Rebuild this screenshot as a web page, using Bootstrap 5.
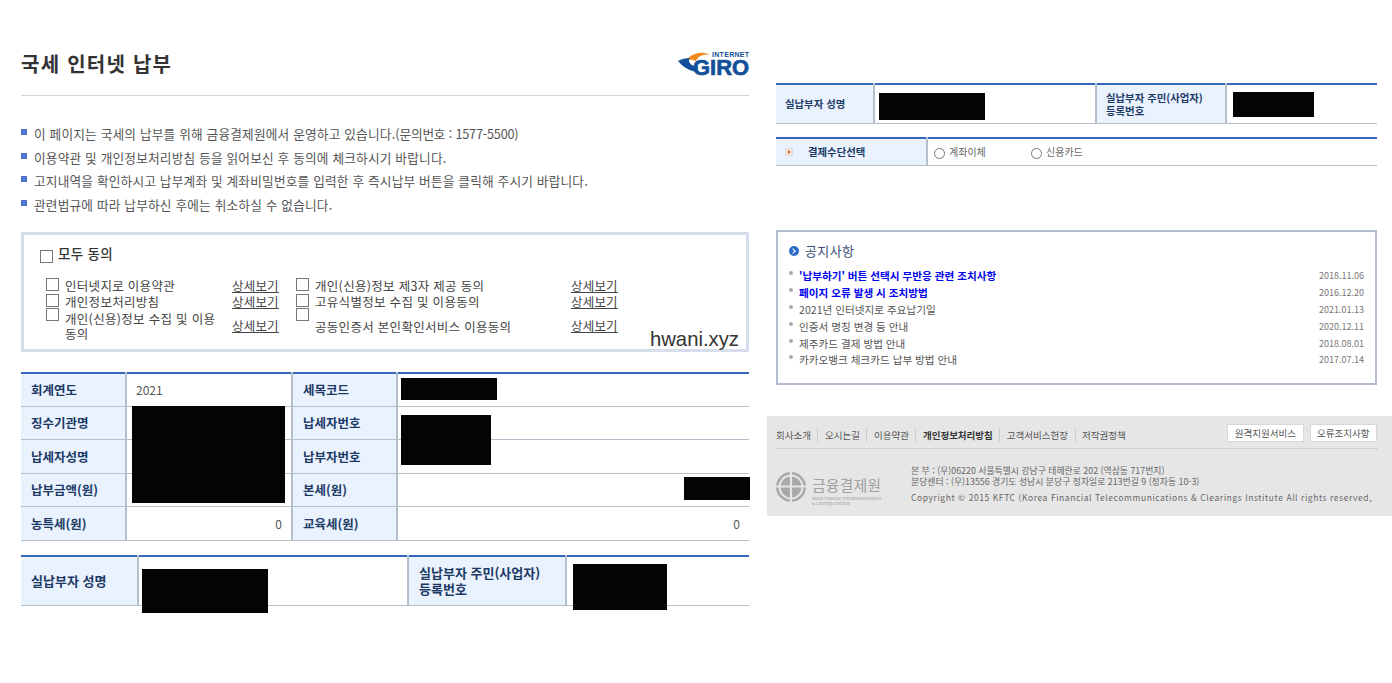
<!DOCTYPE html>
<html lang="ko">

<head>
    <meta charset="UTF-8">
    <meta name="viewport" content="width=device-width, initial-scale=1.0">
    <title>국세 인터넷 납부</title>
    <link href="https://cdn.jsdelivr.net/npm/bootstrap@5.3.0/dist/css/bootstrap.min.css" rel="stylesheet">
    <style>
        body {
            font-family: "Noto Sans CJK KR", "Liberation Sans", sans-serif;
            background-color: #fff;
            color: #555;
            font-size: 12px;
        }

        .page-wrap {
            width: 1392px;
            height: 683px;
            overflow: hidden;
        }

        .left-side {
            width: 728px;
            margin-left: 21px;
            padding-top: 50px;
        }

        .right-side {
            width: 625px;
            margin-left: 18px;
            padding-top: 83px;
        }

        .title-bar {
            height: 46px;
            border-bottom: 1px solid #d2d2d2;
        }

        .title-bar h1 {
            font-size: 20px;
            font-weight: 700;
            color: #333;
            margin: 0;
            line-height: 28px;
            letter-spacing: 1.25px;
        }

        .giro-logo {
            width: 72px;
            height: 32px;
            display: block;
        }

        .info-list {
            list-style: none;
            margin: 26px 0 0;
            padding: 0;
            font-size: 12.7px;
            color: #555;
        }

        .info-list li {
            height: 23.7px;
            line-height: 24px;
            padding-left: 13px;
            position: relative;
            white-space: nowrap;
            letter-spacing: .17px;
        }

        .info-list li::before {
            content: "";
            position: absolute;
            left: 0;
            top: 7px;
            width: 6px;
            height: 6px;
            background: #4a76cf;
        }

        .tel-no {
            letter-spacing: -.2px;
        }

        .agree-box {
            margin-top: 15px;
            height: 120px;
            border: 3px solid #d5deea;
            padding: 9px 16px 0 16px;
            position: relative;
            color: #444;
            font-size: 12.5px;
            letter-spacing: .3px;
        }

        .agree-all {
            font-size: 13.5px;
            font-weight: 500;
            height: 32px;
            line-height: 19px;
            color: #333;
        }

        .chk-box {
            width: 13px;
            height: 13px;
            border: 1px solid #777;
            background: #fff;
            flex: none;
            display: block;
        }

        .agree-all .chk-box {
            margin-top: 6px;
            margin-right: 5px;
        }

        .agree-cols {
            padding-left: 6px;
            padding-top: 3px;
        }

        .agree-col-a {
            width: 233px;
        }

        .agree-col-b {
            width: 322px;
            margin-left: 17px;
        }

        .agree-row {
            line-height: 14px;
            min-height: 16px;
        }

        .agree-row .chk-box {
            margin-top: -1px;
            margin-right: 6px;
        }

        .agree-row .agree-name {
            flex: 1;
            line-height: 14px;
        }

        .agree-row a {
            color: #444;
            width: 47px;
            flex: none;
            white-space: nowrap;
            letter-spacing: .2px;
        }

        .agree-row.row-last {
            margin-top: -2px;
        }

        .row-last .agree-name {
            margin-top: 2px;
            line-height: 15px;
        }

        .row-last .name-low {
            margin-top: 10px;
        }

        .row-last a {
            margin-top: 10px;
        }

        .mark-text {
            position: absolute;
            right: 7px;
            bottom: -4px;
            font-family: "Liberation Sans", sans-serif;
            font-size: 20.3px;
            color: #333;
            line-height: 28px;
            letter-spacing: 0;
        }

        .info-table {
            width: 100%;
            border-collapse: collapse;
            table-layout: fixed;
            border-top: 2px solid #3567bd;
        }

        .info-table th,
        .info-table td {
            border-bottom: 1px solid #b4bfcc;
            border-right: 2px solid #b4bfcc;
            padding: 0 9px;
            font-weight: 400;
        }

        .info-table tr > *:last-child {
            border-right: 0;
        }

        .info-table th {
            background: #e9f2fd;
            color: #1d3a66;
            font-weight: 700;
            font-size: 12.5px;
            padding-left: 10px;
        }

        .tbl-holder {
            position: relative;
        }

        .tax-table tr {
            height: 33.5px;
        }

        .tax-table th {
            padding-top: 1px;
        }

        .tax-table td {
            color: #555;
            padding: 0 9px;
        }

        .payer-holder {
            margin-top: 14px;
        }

        .payer-table tr {
            height: 50px;
        }

        .payer-table th {
            font-size: 13px;
            line-height: 16px;
        }

        .small-table {
            font-size: 10px;
        }

        .small-table th {
            font-size: 10.4px;
            line-height: 13px;
            padding-left: 9px;
        }

        .side-payer tr {
            height: 39px;
        }

        .pay-way {
            margin-top: 13px;
        }

        .pay-way tr {
            height: 28px;
        }

        .pay-way td {
            color: #666;
            padding-left: 6px;
        }

        .way-label-a {
            width: 82px;
        }

        .side-inner {
            width: 601px;
            margin-left: 9px;
        }

        .redact {
            position: absolute;
            background: #040404;
        }

        .radio-dot {
            width: 11px;
            height: 11px;
            border: 1px solid #777;
            border-radius: 50%;
            display: block;
            margin-right: 4px;
            margin-top: 3px;
            flex: none;
        }

        .way-bullet {
            width: 8px;
            height: 8px;
            background: #f6e6d9;
            border: 1px solid #ddd;
            display: block;
            position: relative;
            margin-right: 15px;
        }

        .way-bullet::after {
            content: "";
            position: absolute;
            left: 2px;
            top: 1px;
            border-left: 3px solid #e2642a;
            border-top: 2px solid transparent;
            border-bottom: 2px solid transparent;
        }

        .notice-box {
            margin-top: 64px;
            height: 155px;
            border: 2px solid #b3bccf;
            padding: 9px 11px 0 11px;
        }

        .notice-box h2 {
            font-size: 13px;
            font-weight: 400;
            color: #3d4f78;
            margin: 0 0 6px;
            line-height: 20px;
            letter-spacing: .4px;
        }

        .notice-dot {
            width: 10px;
            height: 10px;
            border-radius: 50%;
            background: #2a6cc9;
            margin-right: 6px;
            display: block;
            position: relative;
        }

        .notice-dot::after {
            content: "";
            position: absolute;
            left: 2px;
            top: 3px;
            width: 4px;
            height: 4px;
            border-top: 1px solid #fff;
            border-right: 1px solid #fff;
            transform: rotate(45deg);
        }

        .notice-list {
            list-style: none;
            padding: 0;
            margin: 0;
            font-size: 10.6px;
        }

        .notice-list li {
            height: 16.9px;
            line-height: 17px;
            padding-left: 10px;
            position: relative;
            color: #555;
        }

        .notice-list li::before {
            content: "";
            position: absolute;
            left: 0;
            top: 4px;
            width: 4px;
            height: 4px;
            border-radius: 50%;
            background: #aaa;
        }

        .notice-list li.hot span:first-child {
            color: #0000ee;
            font-weight: 700;
        }

        .notice-date {
            font-size: 9px;
            color: #777;
        }

        .foot-box {
            margin-top: 31px;
            height: 100px;
            background: #e6e6e6;
            padding: 8px 15px 0 9px;
            color: #555;
            font-size: 9.5px;
        }

        .foot-top {
            height: 25px;
            border-bottom: 1px dotted #bbb;
        }

        .foot-links {
            padding-top: 4px;
        }

        .foot-links span {
            padding-right: 6.5px;
            margin-right: 6.5px;
            border-right: 1px solid #ccc;
        }

        .foot-links span:last-child {
            border-right: 0;
            margin-right: 0;
        }

        .foot-links .now {
            font-weight: 700;
            color: #333;
        }

        .foot-btns {
            gap: 6px;
        }

        .foot-btn {
            background: #fff;
            border: 1px solid #d8d8d8;
            font-size: 9.5px;
            color: #555;
            padding: 0 6.5px;
            height: 18px;
            line-height: 16px;
            border-radius: 0;
        }

        .foot-body {
            padding-top: 17px;
        }

        .kftc-logo {
            width: 30px;
            height: 30px;
            display: block;
            margin-right: 6px;
            margin-top: 6px;
        }

        .kftc-name {
            width: 92px;
            color: #a0a0a0;
            line-height: 1;
            margin-top: 9px;
        }

        .kftc-name b {
            display: block;
            font-size: 15px;
            font-weight: 400;
            line-height: 20px;
        }

        .kftc-name i {
            display: block;
            font-style: normal;
            font-size: 4px;
            line-height: 5px;
            margin-top: 1px;
        }

        .foot-addr {
            line-height: 11px;
            font-size: 8.85px;
            color: #666;
            margin-left: 7px;
            margin-top: -1px;
            white-space: nowrap;
        }

        .foot-copy {
            margin-top: 5px;
            font-size: 8.5px;
            letter-spacing: .57px;
        }
    </style>
</head>

<body>
    <div class="page-wrap d-flex">
        <!-- Left side -->
        <div class="left-side">
            <div class="title-bar d-flex justify-content-between align-items-start">
                <h1>국세 인터넷 납부</h1>
                <svg class="giro-logo" viewBox="0 0 72 32">
                    <path d="M10 10C13 5 20 2 27 3C29 3.300 31 4 32 5C26 4 21 6 19 11C16 9.500 13 9.500 10 10Z" fill="#f08a1d" />
                    <path d="M1 11C4 9 9 8 13 8C11 10 12 13 15 15C17 16 19 16.500 21 16.500L20 22C12 21 5 16 1 11Z" fill="#12509a" />
                    <text x="35" y="7" font-family="Liberation Sans" font-size="7" font-weight="700" fill="#12509a" letter-spacing=".3">INTERNET</text>
                    <text x="16" y="25" font-family="Liberation Sans" font-size="22" font-weight="700" fill="#12509a" stroke="#12509a" stroke-width=".7" textLength="56" lengthAdjust="spacingAndGlyphs">GIRO</text>
                </svg>
            </div>

            <ul class="info-list">
                <li>이 페이지는 국세의 납부를 위해 금융결제원에서 운영하고 있습니다.<span class="tel-no">(문의번호 : 1577-5500)</span></li>
                <li>이용약관 및 개인정보처리방침 등을 읽어보신 후 동의에 체크하시기 바랍니다.</li>
                <li>고지내역을 확인하시고 납부계좌 및 계좌비밀번호를 입력한 후 즉시납부 버튼을 클릭해 주시기 바랍니다.</li>
                <li>관련법규에 따라 납부하신 후에는 취소하실 수 없습니다.</li>
            </ul>

            <div class="agree-box">
                <div class="agree-all d-flex"><span class="chk-box"></span>모두 동의</div>
                <div class="agree-cols d-flex">
                    <div class="agree-col-a">
                        <div class="agree-row d-flex"><span class="chk-box"></span><span class="agree-name">인터넷지로 이용약관</span><a href="#">상세보기</a></div>
                        <div class="agree-row d-flex"><span class="chk-box"></span><span class="agree-name">개인정보처리방침</span><a href="#">상세보기</a></div>
                        <div class="agree-row row-last d-flex align-items-start"><span class="chk-box"></span><span class="agree-name">개인(신용)정보 수집 및 이용<br>동의</span><a href="#">상세보기</a></div>
                    </div>
                    <div class="agree-col-b">
                        <div class="agree-row d-flex"><span class="chk-box"></span><span class="agree-name">개인(신용)정보 제3자 제공 동의</span><a href="#">상세보기</a></div>
                        <div class="agree-row d-flex"><span class="chk-box"></span><span class="agree-name">고유식별정보 수집 및 이용동의</span><a href="#">상세보기</a></div>
                        <div class="agree-row row-last d-flex align-items-start"><span class="chk-box"></span><span class="agree-name name-low">공동인증서 본인확인서비스 이용동의</span><a href="#">상세보기</a></div>
                    </div>
                </div>
                <span class="mark-text">hwani.xyz</span>
            </div>

            <div class="tbl-holder mt-3 pt-1">
                <table class="info-table tax-table">
                    <colgroup>
                        <col style="width:105px">
                        <col style="width:166px">
                        <col style="width:105px">
                        <col>
                    </colgroup>
                    <tr><th>회계연도</th><td>2021</td><th>세목코드</th><td></td></tr>
                    <tr><th>징수기관명</th><td></td><th>납세자번호</th><td></td></tr>
                    <tr><th>납세자성명</th><td></td><th>납부자번호</th><td></td></tr>
                    <tr><th>납부금액(원)</th><td></td><th>본세(원)</th><td></td></tr>
                    <tr><th>농특세(원)</th><td class="text-end">0</td><th>교육세(원)</th><td class="text-end">0</td></tr>
                </table>
                <!-- blacked out values -->
                <div class="redact" style="left:111px;top:38px;width:153px;height:97px"></div>
                <div class="redact" style="left:380px;top:10px;width:96px;height:22px"></div>
                <div class="redact" style="left:380px;top:47px;width:90px;height:50px"></div>
                <div class="redact" style="left:663px;top:109px;width:66px;height:23px"></div>
            </div>

            <div class="tbl-holder payer-holder">
                <table class="info-table payer-table">
                    <colgroup>
                        <col style="width:117px">
                        <col style="width:270px">
                        <col style="width:158px">
                        <col>
                    </colgroup>
                    <tr><th>실납부자 성명</th><td></td><th>실납부자 주민(사업자)<br>등록번호</th><td></td></tr>
                </table>
                <div class="redact" style="left:121px;top:14px;width:126px;height:44px"></div>
                <div class="redact" style="left:552px;top:9px;width:94px;height:46px"></div>
            </div>
        </div>

        <!-- Right side -->
        <div class="right-side">
            <div class="side-inner">
                <div class="tbl-holder">
                    <table class="info-table small-table side-payer">
                        <colgroup>
                            <col style="width:98px">
                            <col style="width:222px">
                            <col style="width:130px">
                            <col>
                        </colgroup>
                        <tr><th>실납부자 성명</th><td></td><th>실납부자 주민(사업자)<br>등록번호</th><td></td></tr>
                    </table>
                    <div class="redact" style="left:103px;top:10px;width:106px;height:27px"></div>
                    <div class="redact" style="left:457px;top:9px;width:81px;height:25px"></div>
                </div>
                <table class="info-table small-table pay-way">
                    <colgroup>
                        <col style="width:151px">
                        <col>
                    </colgroup>
                    <tr>
                        <th><div class="d-flex align-items-center"><span class="way-bullet"></span>결제수단선택</div></th>
                        <td>
                            <div class="d-flex align-items-center">
                                <span class="radio-dot"></span><span class="way-label-a">계좌이체</span>
                                <span class="radio-dot"></span><span>신용카드</span>
                            </div>
                        </td>
                    </tr>
                </table>

                <div class="notice-box">
                    <h2 class="d-flex align-items-center"><span class="notice-dot"></span>공지사항</h2>
                    <ul class="notice-list">
                        <li class="hot d-flex justify-content-between"><span>'납부하기' 버튼 선택시 무반응 관련 조치사항</span><span class="notice-date">2018.11.06</span></li>
                        <li class="hot d-flex justify-content-between"><span>페이지 오류 발생 시 조치방법</span><span class="notice-date">2016.12.20</span></li>
                        <li class="d-flex justify-content-between"><span>2021년 인터넷지로 주요납기일</span><span class="notice-date">2021.01.13</span></li>
                        <li class="d-flex justify-content-between"><span>인증서 명칭 변경 등 안내</span><span class="notice-date">2020.12.11</span></li>
                        <li class="d-flex justify-content-between"><span>제주카드 결제 방법 안내</span><span class="notice-date">2018.08.01</span></li>
                        <li class="d-flex justify-content-between"><span>카카오뱅크 체크카드 납부 방법 안내</span><span class="notice-date">2017.07.14</span></li>
                    </ul>
                </div>
            </div>

            <div class="foot-box">
                <div class="foot-top d-flex justify-content-between align-items-start">
                    <div class="foot-links">
                        <span>회사소개</span><span>오시는길</span><span>이용약관</span><span class="now">개인정보처리방침</span><span>고객서비스헌장</span><span>저작권정책</span>
                    </div>
                    <div class="foot-btns d-flex">
                        <button type="button" class="btn foot-btn">원격지원서비스</button>
                        <button type="button" class="btn foot-btn">오류조치사항</button>
                    </div>
                </div>
                <div class="foot-body d-flex">
                    <svg class="kftc-logo" viewBox="0 0 30 30">
                        <circle cx="15" cy="15" r="15" fill="#a8a8a8" />
                        <circle cx="15" cy="15" r="11.500" fill="none" stroke="#e6e6e6" stroke-width="2" />
                        <path d="M15 0V30M0 14.500H30" stroke="#e6e6e6" stroke-width="2.200" />
                    </svg>
                    <div class="kftc-name"><b>금융결제원</b><i>Korea Financial Telecommunications<br>&amp; Clearings Institute</i></div>
                    <div class="foot-addr">
                        <div>본 부 : (우)06220 서울특별시 강남구 테헤란로 202 (역삼동 717번지)</div>
                        <div>분당센터 : (우)13556 경기도 성남시 분당구 정자일로 213번길 9 (정자동 10-3)</div>
                        <div class="foot-copy">Copyright © 2015 KFTC (Korea Financial Telecommunications &amp; Clearings Institute All rights reserved,</div>
                    </div>
                </div>
            </div>
        </div>
    </div>

    <script src="https://cdn.jsdelivr.net/npm/bootstrap@5.3.0/dist/js/bootstrap.bundle.min.js"></script>
</body>

</html>
